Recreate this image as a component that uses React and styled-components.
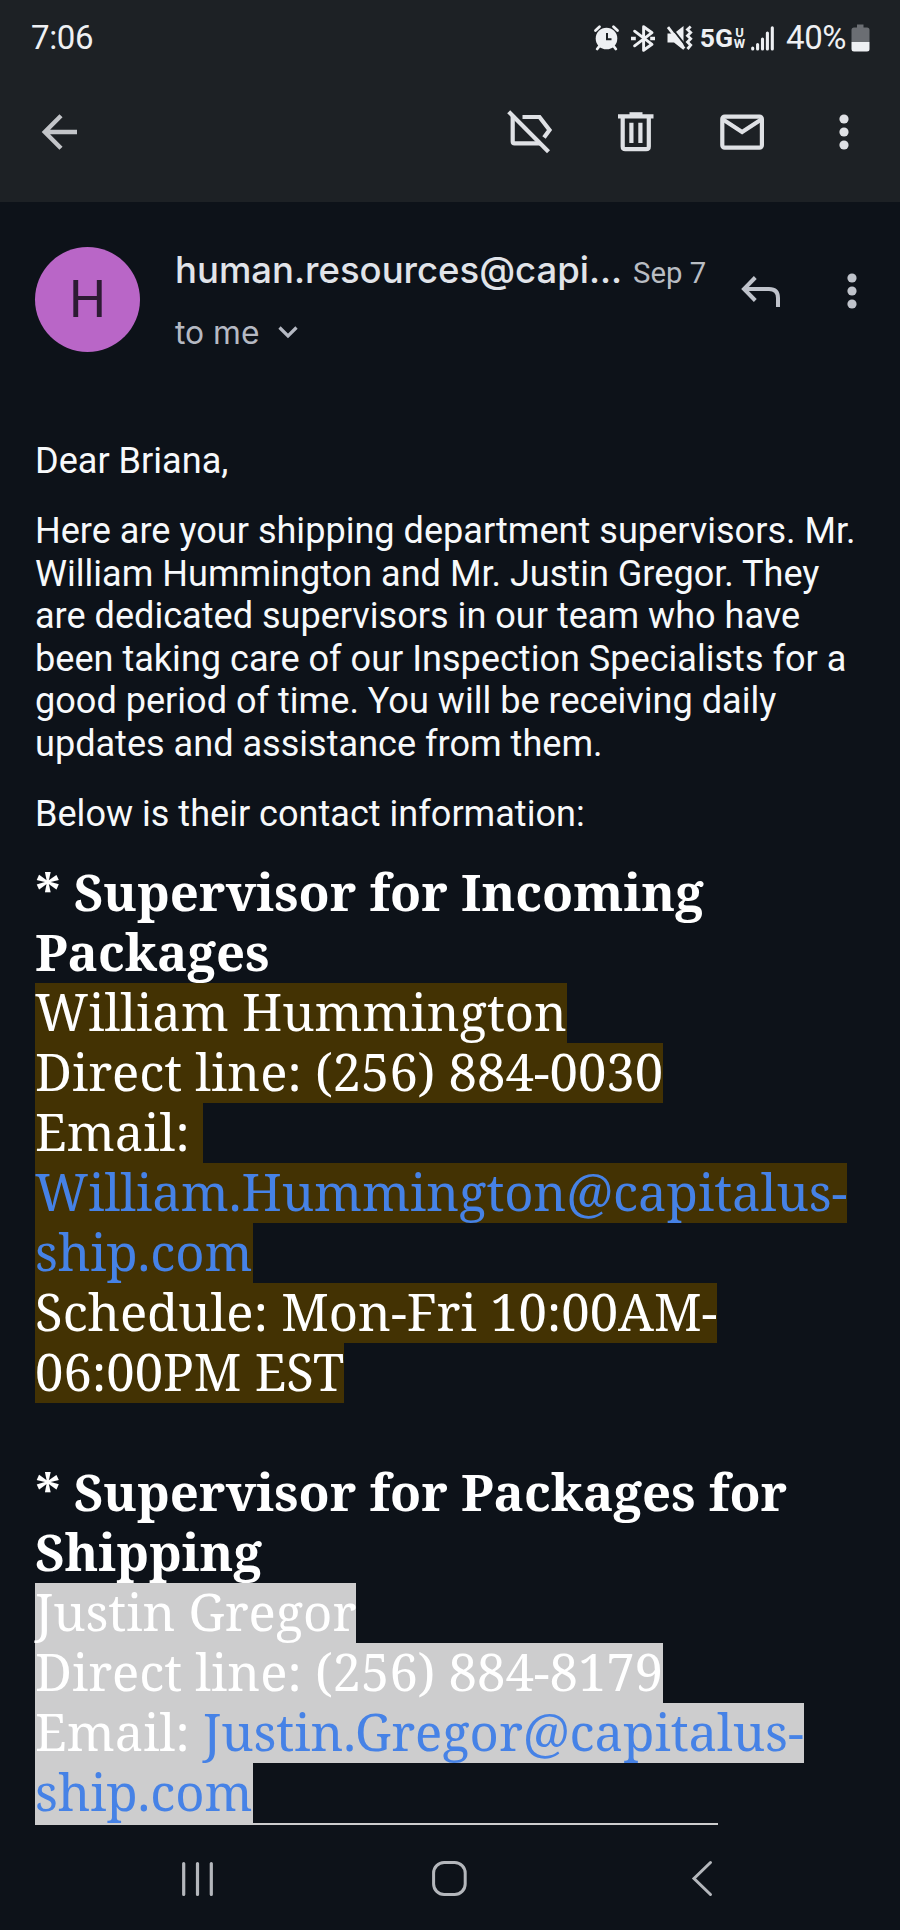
import React from 'react'
import styled, { createGlobalStyle } from 'styled-components'

const GlobalStyle = createGlobalStyle`
  body {
    margin: 0;
    background-color: #0d1219;
  }
`

const Screen = styled.div`
  display: flex;
  flex-direction: column;
  width: 900px;
  height: 1930px;
  overflow: hidden;
  background-color: #0d1219;
  font-family: Roboto, sans-serif;
`

const Top = styled.header`
  height: 202px;
  flex: none;
  background-color: #1d2125;
`

const StatusBar = styled.div`
  display: flex;
  justify-content: space-between;
  align-items: center;
  height: 76px;
  padding: 0 30px 0 31px;
  color: #eef0f3;
`

const StatusText = styled.span`
  font-size: 33px;
  line-height: 40px;
  letter-spacing: -0.4px;
`

const StatusIcons = styled.div`
  display: flex;
  align-items: center;
`

const Icon = styled.svg`
  display: block;
  flex: none;
  overflow: visible;
  margin-left: ${props => props.$left || 0}px;
`

const Network = styled.div`
  display: flex;
  align-items: center;
  margin-left: 8px;
  font-size: 26.5px;
  font-weight: 700;
  line-height: 28px;
`

const NetworkType = styled.span`
  display: flex;
  flex-direction: column;
  width: 11px;
  margin-left: 1px;
  align-items: center;
  font-size: 13px;
  line-height: 11px;
`

const Battery = styled(StatusText)`
  margin-left: 12px;
  width: 61px;
`

const AppBar = styled.div`
  display: flex;
  align-items: center;
  height: 112px;
  padding: 0 51px 0 42px;
  color: #dfe1e5;
`

const Actions = styled.div`
  display: flex;
  align-items: center;
  margin-left: auto;
`

const MessageHeader = styled.section`
  display: flex;
  height: 192px;
  padding: 45px 43px 0 35px;
  box-sizing: border-box;
  flex: none;
`

const Avatar = styled.div`
  display: flex;
  justify-content: center;
  align-items: center;
  width: 105px;
  height: 105px;
  border-radius: 50%;
  background-color: #b966c7;
  color: #2c1b33;
  font-size: 52px;
  line-height: 54px;
`

const Sender = styled.div`
  margin-left: 35px;
  width: 535px;
  font-family: Inter, sans-serif;
`

const NameRow = styled.div`
  display: flex;
  align-items: baseline;
  height: 62px;
  line-height: 47px;
`

const Name = styled.span`
  width: 458px;
  color: #e1e4e9;
  font-size: 36.5px;
  font-weight: 500;
  white-space: nowrap;
`

const DateText = styled.span`
  color: #b9bdc3;
  font-family: Roboto, sans-serif;
  font-size: 29.3px;
`

const Recipient = styled.div`
  display: flex;
  align-items: center;
  color: #b5b9c3;
  font-size: 31.8px;
  line-height: 48px;
`

const HeaderActions = styled.div`
  display: flex;
  align-items: center;
  height: 88px;
  color: #bfc3cb;
  margin-left: auto;
`

const Body = styled.main`
  height: 1431px;
  padding: 46px 35px 0;
  box-sizing: border-box;
  overflow: hidden;
  flex: none;
  color: #f7f9fb;
`

const Paragraph = styled.p`
  margin: 0 0 27.8px;
  font-size: 36.1px;
  line-height: 42.5px;
  white-space: nowrap;
`

const Block = styled.div`
  margin-bottom: 60px;
  font-family: 'Noto Serif', serif;
  font-size: 50.8px;
  color: #fff;
`

const Line = styled.div`
  width: fit-content;
  height: 60px;
  line-height: 58.6px;
  white-space: pre;
  background-color: ${props => props.$mark || 'transparent'};
  font-weight: ${props => (props.$bold ? 700 : 400)};
`

// top edge of the highlight on the line that is scrolled out of view
const MarkEdge = styled.div`
  width: 683px;
  height: 2px;
  background-color: #cdcdce;
`

const Link = styled.span`
  color: #4682e6;
`

const NavBar = styled.nav`
  display: flex;
  align-items: center;
  flex: 1;
  padding: 2px 0 0 182px;
  color: #b4b7bc;
`

const OLIVE = '#433203'
const GRAY = '#cdcdce'

const Dots = ({ left }) => (
  <Icon $left={left} width='10' height='36' fill='currentColor'>
    <circle cx='5' cy='5' r='4.6' />
    <circle cx='5' cy='18' r='4.6' />
    <circle cx='5' cy='31' r='4.6' />
  </Icon>
)

const AlarmIcon = () => (
  <Icon width='25' height='26' fill='none' stroke='currentColor' strokeLinecap='round'>
    <circle cx='12.5' cy='13.5' r='10.8' fill='currentColor' stroke='none' />
    <path d='M1.5 5.5 L5.5 1.8 M23.5 5.5 L19.5 1.8 M5.5 21 L3.2 24 M19.5 21 L21.8 24' strokeWidth='2.8' />
    <path d='M13 8 V14.3 H17.5' stroke='#1d2125' strokeWidth='2' strokeLinecap='butt' />
  </Icon>
)

const BluetoothIcon = () => (
  <Icon $left={12} width='24' height='27' fill='none' stroke='currentColor' strokeWidth='2.9'>
    <path d='M3.6 6.2 L21 19.3 L12.6 25.3 V1.7 L21 7.7 L3.6 20.8' strokeLinejoin='round' strokeLinecap='round' />
    <path d='M0 13.5 H4.8 M19.2 13.5 H24' strokeWidth='3.6' />
  </Icon>
)

const MuteIcon = () => (
  <Icon $left={12} width='25' height='26'>
    <path d='M0.5 8.5 H7 L16.5 1 V25 L7 17.5 H0.5 Z' fill='currentColor' />
    <path d='M2.8 0.5 L19.8 22' stroke='#1d2125' strokeWidth='2' />
    <path d='M1 2.2 L17.3 23.5' stroke='currentColor' strokeWidth='2.8' />
    <path
      d='M23.7 1.5 L20.5 4.5 L23.7 7.5 L20.5 10.7 L23.7 13.8 L20.5 17 L23.7 20.2 L20.5 24'
      fill='none'
      stroke='currentColor'
      strokeWidth='2.8'
    />
  </Icon>
)

const SignalIcon = () => (
  <Icon $left={6} width='23' height='25' stroke='currentColor' strokeWidth='3.1' strokeLinecap='round'>
    <path d='M1.7 22 V23 M6.6 18.5 V23 M11.5 13 V23 M16.4 7 V23 M21.3 1.8 V23' />
  </Icon>
)

const BatteryIcon = () => (
  <Icon $left={4} width='19' height='28'>
    <path d='M6 0.5 H12.5 V3.5 H16 Q18.5 3.5 18.5 6 V18 H0.5 V6 Q0.5 3.5 3 3.5 H6 Z' fill='#6b6e73' />
    <path d='M0.5 18 H18.5 V25 Q18.5 27.5 16 27.5 H3 Q0.5 27.5 0.5 25 Z' fill='currentColor' />
  </Icon>
)

const BackIcon = () => (
  <Icon width='36' height='36' fill='none' stroke='#c3c5c9' strokeWidth='4.4'>
    <path d='M35 18 H4 M19 1.8 L2.8 18 L19 34.2' />
  </Icon>
)

const LabelOffIcon = () => (
  <Icon width='45' height='44' fill='none' stroke='currentColor' strokeWidth='4.2'>
    <path d='M1.7 1.7 L41.5 41.8' />
    <path d='M5.7 6 V31.5 Q5.7 33.4 7.6 33.4 H33' />
    <path d='M15.5 7 H32.5 L42.5 20 L37 27.5' />
  </Icon>
)

const TrashIcon = () => (
  <Icon $left={66} width='36' height='40' fill='none' stroke='currentColor' strokeWidth='4.2'>
    <path d='M0 4.3 H35.5' />
    <path d='M11.5 2 H24.5' strokeWidth='3.6' />
    <path d='M4.7 4 V34.6 Q4.7 37.2 7.3 37.2 H28.2 Q30.8 37.2 30.8 34.6 V4' />
    <path d='M13.4 10.8 V31 M22.4 10.8 V31' />
  </Icon>
)

const MailIcon = () => (
  <Icon $left={66} width='44' height='36' fill='none' stroke='currentColor' strokeWidth='4.2'>
    <rect x='2.3' y='2.6' width='39.6' height='31' rx='2.4' />
    <path d='M3 5.5 L22.1 18 L41.2 5.5' />
  </Icon>
)

const ReplyIcon = () => (
  <Icon width='40' height='32' fill='none' stroke='currentColor' strokeWidth='4'>
    <path d='M14.3 2.5 L3 14 L14.3 25.5 M3.5 14 H28 Q37 14 37 23 V32' />
  </Icon>
)

const App = () => (
  <Screen>
    <GlobalStyle />
    <Top>
      <StatusBar>
        <StatusText>7:06</StatusText>
        <StatusIcons>
          <AlarmIcon />
          <BluetoothIcon />
          <MuteIcon />
          <Network>
            5G
            <NetworkType>
              <span>U</span>
              <span>W</span>
            </NetworkType>
          </Network>
          <SignalIcon />
          <Battery>40%</Battery>
          <BatteryIcon />
        </StatusIcons>
      </StatusBar>
      <AppBar>
        <BackIcon />
        <Actions>
          <LabelOffIcon />
          <TrashIcon />
          <MailIcon />
          <Dots left={75} />
        </Actions>
      </AppBar>
    </Top>
    <MessageHeader>
      <Avatar>H</Avatar>
      <Sender>
        <NameRow>
          <Name>human.resources@capi...</Name>
          <DateText>Sep 7</DateText>
        </NameRow>
        <Recipient>
          to me
          <Icon $left={18} width='20' height='12' fill='none' stroke='currentColor' strokeWidth='3.2'>
            <path d='M1.5 0.5 L10 9 L18.5 0.5' />
          </Icon>
        </Recipient>
      </Sender>
      <HeaderActions>
        <ReplyIcon />
        <Dots left={66} />
      </HeaderActions>
    </MessageHeader>
    <Body>
      <Paragraph>Dear Briana,</Paragraph>
      <Paragraph>
        Here are your shipping department supervisors. Mr.
        <br />
        William Hummington and Mr. Justin Gregor. They
        <br />
        are dedicated supervisors in our team who have
        <br />
        been taking care of our Inspection Specialists for a
        <br />
        good period of time. You will be receiving daily
        <br />
        updates and assistance from them.
      </Paragraph>
      <Paragraph>Below is their contact information:</Paragraph>
      <Block>
        <Line $bold>* Supervisor for Incoming</Line>
        <Line $bold>Packages</Line>
        <Line $mark={OLIVE}>William Hummington</Line>
        <Line $mark={OLIVE}>Direct line: (256) 884-0030</Line>
        <Line $mark={OLIVE}>{'Email: '}</Line>
        <Line $mark={OLIVE}>
          <Link>William.Hummington@capitalus-</Link>
        </Line>
        <Line $mark={OLIVE}>
          <Link>ship.com</Link>
        </Line>
        <Line $mark={OLIVE}>Schedule: Mon-Fri 10:00AM-</Line>
        <Line $mark={OLIVE}>06:00PM EST</Line>
      </Block>
      <Block>
        <Line $bold>* Supervisor for Packages for</Line>
        <Line $bold>Shipping</Line>
        <Line $mark={GRAY}>Justin Gregor</Line>
        <Line $mark={GRAY}>Direct line: (256) 884-8179</Line>
        <Line $mark={GRAY}>
          Email: <Link>Justin.Gregor@capitalus-</Link>
        </Line>
        <Line $mark={GRAY}>
          <Link>ship.com</Link>
        </Line>
        <MarkEdge />
      </Block>
    </Body>
    <NavBar>
      <Icon width='31' height='34' stroke='currentColor' strokeWidth='3.2' strokeLinecap='round'>
        <path d='M1.7 1.6 V32.4 M15.5 1.6 V32.4 M29.3 1.6 V32.4' />
      </Icon>
      <Icon $left={219} width='35' height='35' fill='none' stroke='currentColor' strokeWidth='3'>
        <rect x='1.6' y='1.6' width='31.6' height='31.8' rx='10.5' />
      </Icon>
      <Icon $left={225} width='20' height='35' fill='none' stroke='currentColor' strokeWidth='3' strokeLinecap='round'>
        <path d='M18.5 1.5 L2 17.5 L18.5 33.5' />
      </Icon>
    </NavBar>
  </Screen>
)

export default App
